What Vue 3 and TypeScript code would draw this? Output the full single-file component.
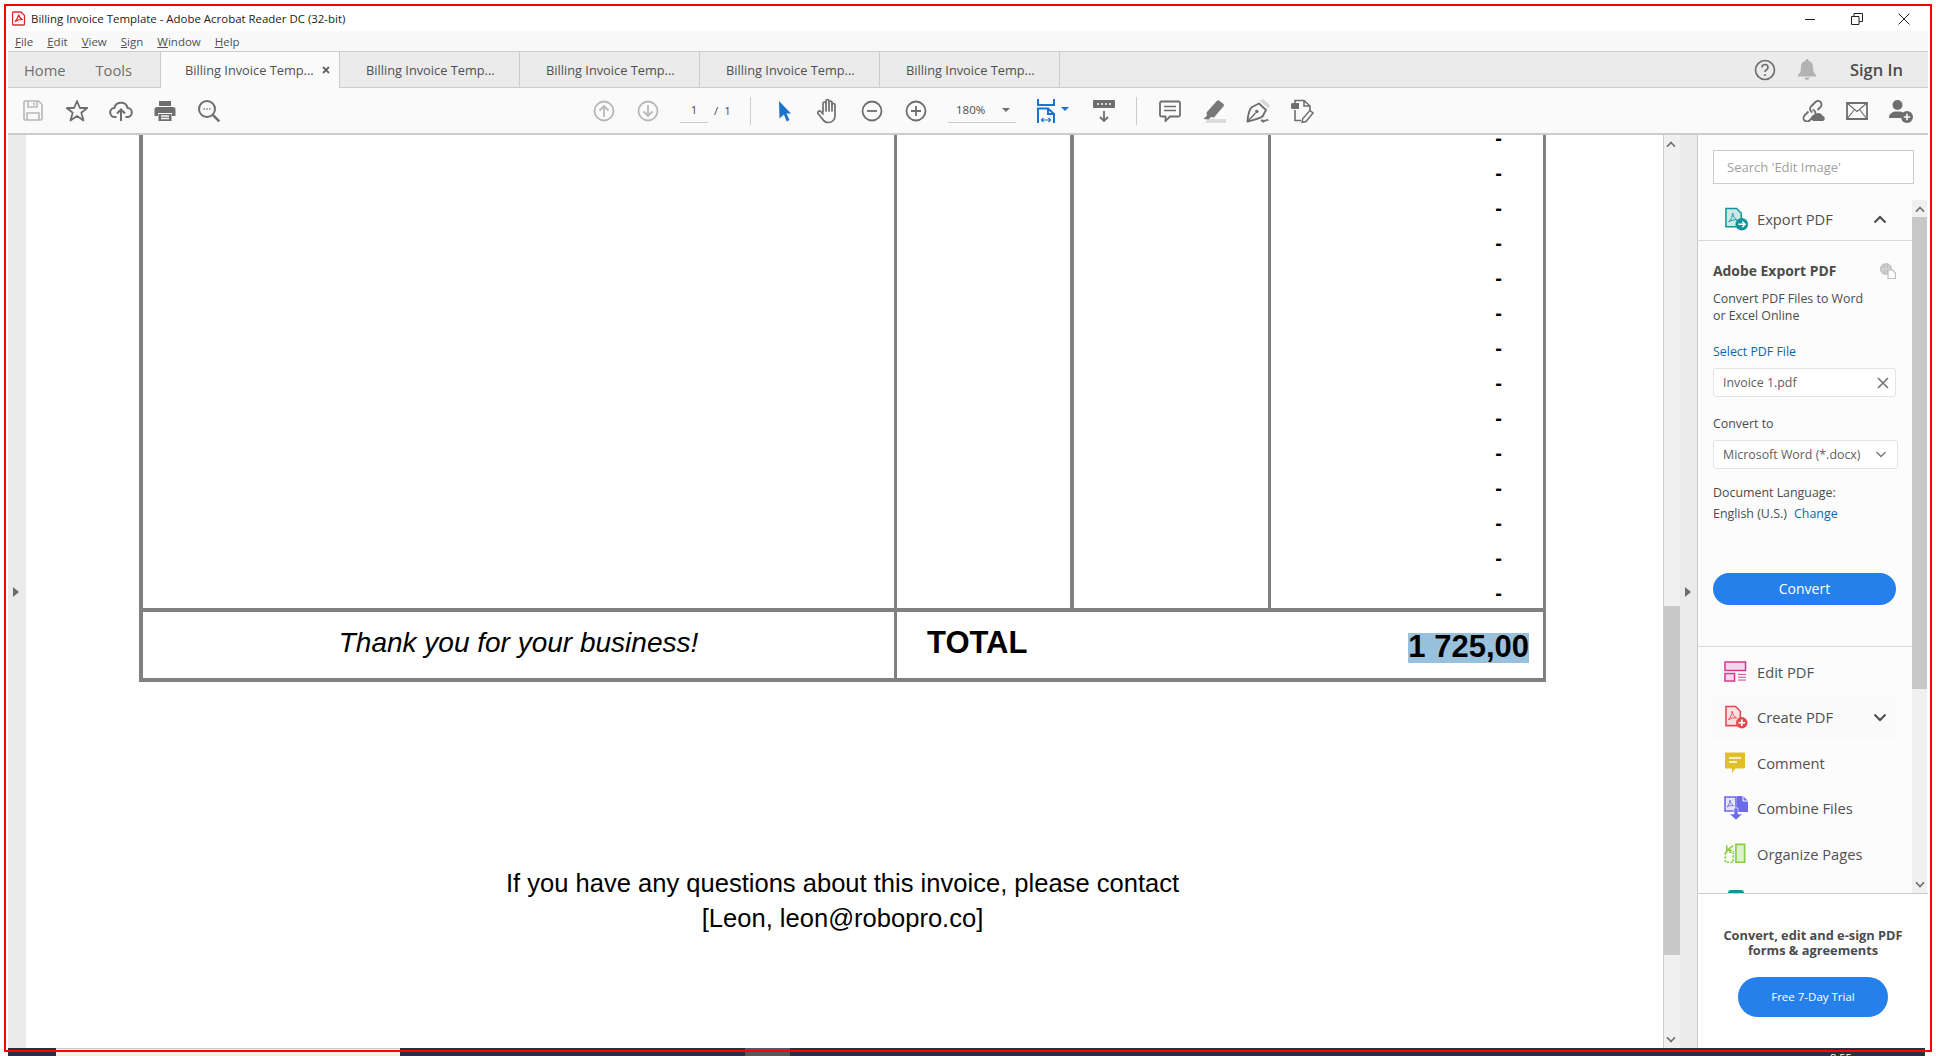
<script setup lang="ts">
const menus = [
  { key: 'F', rest: 'ile' },
  { key: 'E', rest: 'dit' },
  { key: 'V', rest: 'iew' },
  { key: 'S', rest: 'ign' },
  { key: 'W', rest: 'indow' },
  { key: 'H', rest: 'elp' }
]
const otherTabs = [1, 2, 3, 4]
const dashes = Array.from({ length: 14 }, (_, i) => i)
</script>

<template>
  <div class="screen">
    <header class="titlebar">
      <svg class="app-logo" width="14" height="15" viewBox="0 0 14 15">
        <path d="M1.5 1h7.5l3.500 3.500V13a1 1 0 0 1-1 1h-10a1 1 0 0 1-1-1V2a1 1 0 0 1 1-1z" fill="#fff" stroke="#e3242b" stroke-width="1.300" />
        <path d="M6.600 3.600c-.6 2.400-1.600 5-3.600 7.300 2-1.600 5-2.600 7.600-2.400-2.300-.9-3.600-2.600-4-4.900z" fill="none" stroke="#e3242b" stroke-width="1.200" />
      </svg>
      <span class="title">Billing Invoice Template - Adobe Acrobat Reader DC (32-bit)</span>
      <div class="win-controls">
        <svg width="12" height="12" viewBox="0 0 12 12"><path d="M1 6.500h10" stroke="#222" stroke-width="1" /></svg>
        <svg width="12" height="12" viewBox="0 0 12 12"><path d="M.5 3.500h7.500v8H.5zM3 3.500V.5h8.500v8H8" fill="none" stroke="#222" stroke-width="1" /></svg>
        <svg width="12" height="12" viewBox="0 0 12 12"><path d="M.5.5l11 11M11.500.5l-11 11" stroke="#222" stroke-width="1" /></svg>
      </div>
    </header>

    <nav class="menubar">
      <span v-for="m in menus" :key="m.key" class="menu"><u>{{ m.key }}</u>{{ m.rest }}</span>
    </nav>

    <div class="tabbar">
      <div class="home-tabs">
        <span>Home</span>
        <span>Tools</span>
      </div>
      <div class="tab active">
        <span>Billing Invoice Temp...</span>
        <svg class="tab-close" width="8" height="8" viewBox="0 0 8 8"><path d="M1 1l6 6M7 1l-6 6" stroke="#666" stroke-width="1.800" /></svg>
      </div>
      <div v-for="t in otherTabs" :key="t" class="tab">
        <span>Billing Invoice Temp...</span>
      </div>
      <div class="tab-right">
        <svg width="22" height="22" viewBox="0 0 22 22">
          <circle cx="11" cy="11" r="9.500" fill="none" stroke="#6e6e6e" stroke-width="1.700" />
          <path d="M8 8.500c0-4 6-4 6 0 0 2.300-3 2.200-3 4.500" fill="none" stroke="#6e6e6e" stroke-width="1.700" />
          <circle cx="11" cy="16" r="1.100" fill="#6e6e6e" />
        </svg>
        <svg class="bell" width="18" height="21" viewBox="0 0 18 21">
          <path d="M9 0a1.500 1.500 0 0 1 1.500 1.700C13.800 2.500 15 5 15 8.500c0 4 1 5.500 3 7.500v1.500H0V16c2-2 3-3.500 3-7.500C3 5 4.200 2.500 7.500 1.700A1.500 1.500 0 0 1 9 0zM6.500 18.500h5a2.500 2.500 0 0 1-5 0z" fill="#b3b3b3" />
        </svg>
        <span class="sign-in">Sign In</span>
      </div>
    </div>

    <div class="toolbar">
      <div class="tool-group">
        <button class="tool">
          <svg width="20" height="21" viewBox="0 0 20 21" fill="none" stroke="#b8b8b8" stroke-width="1.600">
            <path d="M1.500 1h14l3.500 3.500V18.500a1.500 1.500 0 0 1-1.500 1.500h-15A1.500 1.500 0 0 1 1 18.500V2z" />
            <path d="M5 1v6h9V1M11 2.500v3M4 20v-7h12v7" />
          </svg>
        </button>
        <button class="tool">
          <svg width="24" height="24" viewBox="0 0 24 24"><path d="M12 2l2.900 7h7.300l-5.900 4.800 2.200 7.600L12 17l-6.500 4.400 2.200-7.600L1.800 9h7.300z" fill="none" stroke="#6e6e6e" stroke-width="1.800" stroke-linejoin="round" /></svg>
        </button>
        <button class="tool">
          <svg width="24" height="24" viewBox="0 0 24 24" fill="none" stroke="#6e6e6e" stroke-width="2">
            <path d="M7.500 18H6a4.500 4.500 0 0 1-.6-9A6.800 6.800 0 0 1 18.600 9 4.500 4.500 0 0 1 18 18h-1.500" />
            <path d="M12 22V11.500M8 14.500l4-4 4 4" />
          </svg>
        </button>
        <button class="tool">
          <svg width="22" height="22" viewBox="0 0 22 22">
            <path d="M5 1h12v5H5zM3 7h16a2.500 2.500 0 0 1 2.500 2.500V16H18v-3H4v3H.5V9.500A2.500 2.500 0 0 1 3 7z" fill="#6e6e6e" />
            <path d="M4.500 14h13v7h-13z" fill="#6e6e6e" />
            <path d="M7 16h8M7 18.500h8" stroke="#fafafa" stroke-width="1.300" />
          </svg>
        </button>
        <button class="tool">
          <svg width="24" height="24" viewBox="0 0 24 24" fill="none" stroke="#6e6e6e">
            <circle cx="10" cy="10" r="8" stroke-width="2" />
            <path d="M15.800 15.800l6.500 6.500" stroke-width="2.600" />
            <path d="M6.500 10h1.400M9.300 10h1.400M12.100 10h1.400" stroke-width="1.500" />
          </svg>
        </button>
      </div>

      <div class="tool-group nav-group">
        <button class="tool">
          <svg width="22" height="22" viewBox="0 0 22 22" fill="none" stroke="#b8b8b8" stroke-width="1.800"><circle cx="11" cy="11" r="9.500" /><path d="M11 17V6M6.500 10.500L11 6l4.500 4.500" /></svg>
        </button>
        <button class="tool">
          <svg width="22" height="22" viewBox="0 0 22 22" fill="none" stroke="#b8b8b8" stroke-width="1.800"><circle cx="11" cy="11" r="9.500" /><path d="M11 5v11M6.500 11.500L11 16l4.500-4.500" /></svg>
        </button>
        <span class="page-field">1</span>
        <span class="page-total">/ &nbsp;1</span>
        <i class="tool-sep after"></i>
        <button class="tool cursor">
          <svg width="14" height="22" viewBox="0 0 14 22"><path d="M1 1l12 12.500H8.500l3 6.500-2.800 1.500-2.800-7L1.500 18.500z" fill="#1f72c9" /></svg>
        </button>
        <button class="tool">
          <svg width="24" height="26" viewBox="0 0 24 26" fill="none" stroke="#6e6e6e" stroke-width="1.700" stroke-linecap="round">
            <path d="M7 14V5.500a1.500 1.500 0 0 1 3 0V3a1.500 1.500 0 0 1 3 0v1.500a1.500 1.500 0 0 1 3 0V7a1.500 1.500 0 0 1 3 0v11c0 4-3 6.500-6.500 6.500-3 0-4.500-1-6-3.500L2 15.500c-1-1.800 1.500-3.500 3-1.800L7 16" />
            <path d="M10 5v8M13 3.500V13M16 5v8" />
          </svg>
        </button>
        <button class="tool">
          <svg width="22" height="22" viewBox="0 0 22 22" fill="none" stroke="#6e6e6e" stroke-width="1.800"><circle cx="11" cy="11" r="9.500" /><path d="M6 11h10" /></svg>
        </button>
        <button class="tool">
          <svg width="22" height="22" viewBox="0 0 22 22" fill="none" stroke="#6e6e6e" stroke-width="1.800"><circle cx="11" cy="11" r="9.500" /><path d="M6 11h10M11 6v10" /></svg>
        </button>
        <div class="zoom-field">
          <span>180%</span>
          <i class="caret"></i>
        </div>
        <button class="tool fit">
          <svg width="18" height="24" viewBox="0 0 18 24" fill="none" stroke="#1f72c9" stroke-width="2">
            <path d="M1 0v6h16V0" />
            <path d="M1 24V9.500h10l6 5.500v9M11 9.500V15h6" />
            <path d="M4.500 21h9M6.500 19l-2 2 2 2M11.500 19l2 2-2 2" stroke-width="1.200" />
          </svg>
          <i class="caret blue"></i>
        </button>
        <button class="tool kbd">
          <svg width="24" height="24" viewBox="0 0 24 24">
            <rect x="1" y="1" width="22" height="8" rx="1" fill="#6e6e6e" />
            <path d="M5 5h2M9 5h2M13 5h2M17 5h2" stroke="#fafafa" stroke-width="1.500" />
            <path d="M12 12v10M8 18l4 4 4-4" fill="none" stroke="#6e6e6e" stroke-width="1.800" />
          </svg>
        </button>
        <i class="tool-sep before after"></i>
        <button class="tool">
          <svg width="22" height="22" viewBox="0 0 22 22"><path d="M2.500 1.500h17a1.500 1.500 0 0 1 1.500 1.500v12a1.500 1.500 0 0 1-1.500 1.500H11L6.500 21v-4.500h-4A1.500 1.500 0 0 1 1 15V3a1.500 1.500 0 0 1 1.500-1.500z" fill="none" stroke="#6e6e6e" stroke-width="1.800" /><path d="M5 6.500h12M5 10.500h12" stroke="#6e6e6e" stroke-width="1.600" /></svg>
        </button>
        <button class="tool">
          <svg width="24" height="24" viewBox="0 0 24 24">
            <path d="M6 20h18v4H3z" fill="#dcdcdc" />
            <path d="M17 1.500l4.500 3.500a1.500 1.500 0 0 1 .2 2L12 18.500l-3-.5-2.500 2.500-5-.5 3.500-3.500-.5-3L15 1.700a1.500 1.500 0 0 1 2-.2z" fill="#787878" />
          </svg>
        </button>
        <button class="tool">
          <svg width="24" height="24" viewBox="0 0 24 24">
            <path d="M13.500 1.500L17 0l7 6-1.500 3.500z" fill="#d6d6d6" />
            <path d="M1.500 22.500C2 16 3 10 6 8l7-3.500 7 6.500-3.500 6.500C12 20 6 21.500 1.500 22.500z" fill="none" stroke="#6e6e6e" stroke-width="1.900" stroke-linejoin="round" />
            <path d="M2 22l7.500-8" stroke="#6e6e6e" stroke-width="1.400" />
            <circle cx="10.800" cy="12.500" r="1.800" fill="#6e6e6e" />
            <path d="M15 22.500c1-2 1.500-2 2 0s1-2 1.500-1 1 1 1.500 0 1-1 2.500 0" fill="none" stroke="#6e6e6e" stroke-width="1.400" />
          </svg>
        </button>
        <button class="tool">
          <svg width="24" height="24" viewBox="0 0 24 24">
            <path d="M1 5.500a1.500 1.500 0 0 1 1.500-1.500H9v6H2.500A1.500 1.500 0 0 1 1 8.500z" fill="#6e6e6e" />
            <path d="M5 4V1.500h9l6 5.500v4M14 1.500V7h6M5 11v10.500h6" fill="none" stroke="#6e6e6e" stroke-width="1.600" />
            <path d="M20 11.500l3 2.500-7 8.500-4 1 .8-4z" fill="#fafafa" stroke="#6e6e6e" stroke-width="1.500" />
          </svg>
        </button>
      </div>

      <div class="tool-group share-group">
        <button class="tool">
          <svg width="26" height="22" viewBox="0 0 26 22" fill="none" stroke="#6e6e6e" stroke-width="1.800">
            <path d="M8.500 11.500l-4 4a3.500 3.500 0 0 0 5 5l5-5a3.500 3.500 0 0 0-2-5.800" />
            <path d="M12.500 12.300a3.500 3.500 0 0 1-1.500-5.800l4.500-4.500a3.500 3.500 0 0 1 5 5l-3 3" />
            <path d="M14 21a3 3 0 0 1 .500-6 4.500 4.500 0 0 1 8 .8 2.700 2.700 0 0 1 .5 5.200z" fill="#6e6e6e" stroke="none" />
          </svg>
        </button>
        <button class="tool">
          <svg width="22" height="18" viewBox="0 0 22 18" fill="none" stroke="#6e6e6e"><path d="M1 1h20v16H1z" stroke-width="1.800" /><path d="M1 1l10 8.500L21 1M1 17l7.500-9.500M21 17l-7.500-9.500" stroke-width="1.200" /></svg>
        </button>
        <button class="tool">
          <svg width="24" height="24" viewBox="0 0 24 24">
            <circle cx="8.500" cy="6" r="5" fill="#6e6e6e" />
            <path d="M0 19c0-4 3-6 6-6.500h5c2 .3 3 1 3.800 2A7 7 0 0 0 12 19z" fill="#6e6e6e" />
            <circle cx="18" cy="18" r="6" fill="#6e6e6e" />
            <path d="M14.800 18h6.400M18 14.800v6.400" stroke="#fafafa" stroke-width="1.600" />
          </svg>
        </button>
      </div>
    </div>

    <main class="workspace">
      <div class="gutter">
        <i class="gutter-arrow"></i>
      </div>
      <section class="document">
        <div class="sheet">
          <div class="lines">
            <div class="col wide"></div>
            <div class="col mid"></div>
            <div class="col mid2"></div>
            <div class="col amounts">
              <span v-for="d in dashes" :key="d" class="dash">-</span>
            </div>
          </div>
          <div class="total-row">
            <div class="thanks">Thank you for your business!</div>
            <div class="total-cell">
              <strong class="total-label">TOTAL</strong>
              <strong class="total-value">1 725,00</strong>
            </div>
          </div>
          <p class="contact">If you have any questions about this invoice, please contact<br />[Leon, leon@robopro.co]</p>
        </div>
      </section>
      <div class="doc-scroll">
        <i class="chev up"></i>
        <div class="doc-thumb"></div>
        <i class="chev down"></i>
      </div>
      <div class="gutter right">
        <i class="gutter-arrow"></i>
      </div>

      <aside class="panel">
        <div class="search-wrap">
          <div class="search">Search 'Edit Image'</div>
        </div>
        <div class="panel-scroll">
          <div class="panel-body">
            <div class="tool-row export">
              <svg class="tool-icon" width="23" height="24" viewBox="0 0 24 24">
                <path d="M1 1h11l5 5v14H1z" fill="#cfe6e8" stroke="#12949a" stroke-width="1.600" />
                <path d="M8 6c-.3 3-1.300 6-4 9 2-1.500 5-2.500 8.500-2-2.500-1.500-4-3.700-4.500-7z" fill="none" stroke="#12949a" stroke-width="1" />
                <circle cx="17.500" cy="17.500" r="6.500" fill="#12949a" />
                <path d="M14 17.500h6.500M18 14.500l3 3-3 3" fill="none" stroke="#fff" stroke-width="1.500" />
              </svg>
              <span>Export PDF</span>
              <svg class="row-chev" width="14" height="9" viewBox="0 0 14 9"><path d="M1.500 7.500L7 2l5.500 5.500" fill="none" stroke="#4b4b4b" stroke-width="2" /></svg>
            </div>
            <div class="export-form">
              <div class="form-head">
                <strong>Adobe Export PDF</strong>
                <svg width="16" height="16" viewBox="0 0 16 16">
                  <circle cx="6" cy="6" r="6" fill="#bdbdbd" />
                  <path d="M1 6h10M6 0v12M3 1.500v9M9 1.500v9" stroke="#e8e8e8" stroke-width=".7" />
                  <path d="M8 7h4.500L15.500 10v5.500H8z" fill="#fcfcfc" stroke="#bdbdbd" stroke-width="1.200" />
                </svg>
              </div>
              <p class="desc">Convert PDF Files to Word<br />or Excel Online</p>
              <div class="label link">Select PDF File</div>
              <div class="field file">
                <span>Invoice 1.pdf</span>
                <svg width="12" height="12" viewBox="0 0 12 12"><path d="M1 1l10 10M11 1L1 11" stroke="#777" stroke-width="1.700" /></svg>
              </div>
              <div class="label convert-to">Convert to</div>
              <div class="field select">
                <span>Microsoft Word (*.docx)</span>
                <svg width="10" height="7" viewBox="0 0 10 7"><path d="M.5 1L5 5.500 9.500 1" fill="none" stroke="#777" stroke-width="1.300" /></svg>
              </div>
              <div class="label doc-lang">Document Language:</div>
              <div class="label lang">English (U.S.) <span class="link change">Change</span></div>
              <div class="convert-btn">Convert</div>
            </div>
            <div class="tool-list">
              <div class="tool-row">
                <svg class="tool-icon" width="23" height="21" viewBox="0 0 24 22" fill="none" stroke="#d83790" stroke-width="1.600">
                  <path d="M1 1h21.500v9H1z" fill="#f7d7e9" />
                  <path d="M1 13h10v8H1z" fill="#f7d7e9" />
                  <path d="M14.500 14H23M14.500 17H23M14.500 20H23" stroke-width="1" />
                </svg>
                <span>Edit PDF</span>
              </div>
              <div class="tool-row hovered">
                <svg class="tool-icon" width="23" height="24" viewBox="0 0 24 24">
                  <path d="M1 1h10l5 5v15H1z" fill="#fbe0e2" stroke="#e34850" stroke-width="1.600" />
                  <path d="M7.500 6c-.3 3-1.300 6-4 9 2-1.500 5-2.500 8.500-2-2.500-1.500-4-3.700-4.500-7z" fill="none" stroke="#e34850" stroke-width="1" />
                  <circle cx="17.500" cy="18" r="6" fill="#e34850" />
                  <path d="M14 18h7M17.500 14.500v7" stroke="#fff" stroke-width="1.800" />
                </svg>
                <span>Create PDF</span>
                <svg class="row-chev" width="14" height="9" viewBox="0 0 14 9"><path d="M1.500 1.500L7 7l5.500-5.500" fill="none" stroke="#4b4b4b" stroke-width="2" /></svg>
              </div>
              <div class="tool-row">
                <svg class="tool-icon" width="22" height="24" viewBox="0 0 22 24">
                  <path d="M2 1.500h18a1 1 0 0 1 1 1v14a1 1 0 0 1-1 1h-8.500L8 22v-4.500H2a1 1 0 0 1-1-1v-14a1 1 0 0 1 1-1z" fill="#e2bf28" />
                  <path d="M5 7h12M5 11h8" stroke="#fff" stroke-width="1.500" />
                </svg>
                <span>Comment</span>
              </div>
              <div class="tool-row">
                <svg class="tool-icon" width="24" height="24" viewBox="0 0 24 24">
                  <path d="M1 1h11v14H1z" fill="#e4e3fb" stroke="#6d6be8" stroke-width="1.600" />
                  <path d="M6 4c-.2 2.500-1 5-3 7 1.600-1.100 3.800-1.800 6.500-1.400C7.500 8.400 6.400 6.500 6 4z" fill="none" stroke="#6d6be8" stroke-width=".9" />
                  <path d="M13 0h6l5 5v11H13z" fill="#6d6be8" />
                  <path d="M19 0v5h5" fill="none" stroke="#fff" stroke-width="1" />
                  <path d="M10 12v6H5.500l6.500 6 6.500-6H14v-6z" fill="#6d6be8" stroke="#fcfcfc" stroke-width=".6" />
                </svg>
                <span>Combine Files</span>
              </div>
              <div class="tool-row">
                <svg class="tool-icon" width="22" height="21" viewBox="0 0 24 22" fill="none" stroke="#86cf3f" stroke-width="1.800">
                  <path d="M13 1h9.500v19.500H13z" fill="#dff2cc" />
                  <path d="M1.500 9.500h8.500v11H1.500z" stroke-dasharray="2.500 1.500" />
                  <path d="M10 2.500L4 7M3 2v5.500h6" stroke-width="1.800" />
                </svg>
                <span>Organize Pages</span>
              </div>
              <svg class="tool-icon clipped" width="16" height="6" viewBox="0 0 16 6"><path d="M0 6V3q0-3 3-3h10q3 0 3 3v3z" fill="#12949a" /></svg>
            </div>
          </div>
          <div class="panel-bar">
            <i class="chev up small"></i>
            <div class="panel-thumb"></div>
            <i class="chev down small"></i>
          </div>
        </div>
        <div class="promo">
          <p>Convert, edit and e-sign PDF<br />forms &amp; agreements</p>
          <div class="trial-btn">Free 7-Day Trial</div>
        </div>
      </aside>
    </main>

    <footer class="taskbar">
      <i class="seg dark s1"></i>
      <i class="seg pale s2"></i>
      <i class="seg dark s3"></i>
      <i class="seg lit s4"></i>
      <i class="seg dark s5"></i>
      <span class="clock">8:55</span>
    </footer>

    <div class="red-frame"></div>
  </div>
</template>

<style>
html,
body {
  margin: 0;
  background: #fff;
}
</style>

<style scoped>
.screen {
  position: relative;
  box-sizing: border-box;
  width: 1936px;
  height: 1056px;
  padding: 6px 8px 0;
  display: flex;
  flex-direction: column;
  overflow: hidden;
  background: #fff;
  font-family: "Open Sans", "Noto Sans", sans-serif;
  color: #4b4b4b;
}

.red-frame {
  position: absolute;
  left: 4px;
  top: 4px;
  width: 1928px;
  height: 1048px;
  box-sizing: border-box;
  border: 2px solid #f00;
  pointer-events: none;
}

.titlebar {
  height: 25px;
  display: flex;
  align-items: center;
  flex: none;
  background: #fff;
}

.app-logo {
  margin-left: 4px;
}

.title {
  margin-left: 5px;
  font-size: 11.450px;
  color: #222;
}

.win-controls {
  margin-left: auto;
  display: flex;
  gap: 35px;
  padding-right: 18px;
}

.menubar {
  height: 20px;
  flex: none;
  background: #f9f9f9;
  display: flex;
  align-items: center;
  gap: 14px;
  padding-left: 7px;
  font-size: 11.500px;
  color: #505050;
}

.tabbar {
  height: 37px;
  flex: none;
  box-sizing: border-box;
  background: #ebebeb;
  border-top: 1px solid #ccc;
  border-bottom: 1px solid #ccc;
  display: flex;
  align-items: stretch;
}

.home-tabs {
  width: 152px;
  display: flex;
  align-items: center;
  gap: 30px;
  padding-left: 16px;
  box-sizing: border-box;
  font-size: 14.700px;
  color: #6e6e6e;
}

.tab {
  width: 180px;
  box-sizing: border-box;
  border-right: 1px solid #ccc;
  display: flex;
  align-items: center;
  padding-left: 26px;
  font-size: 12.800px;
  color: #505050;
}

.tab.active {
  position: relative;
  background: #fafafa;
  border-left: 1px solid #ccc;
  margin-bottom: -1px;
  padding-left: 24px;
}

.tab-close {
  margin-left: 8px;
}

.tab-right {
  margin-left: auto;
  display: flex;
  align-items: center;
  padding-right: 25px;
}

.bell {
  margin-left: 22px;
}

.sign-in {
  margin-left: 34px;
  font-size: 16.500px;
  font-weight: 600;
  color: #4b4b4b;
}

.toolbar {
  height: 47px;
  flex: none;
  box-sizing: border-box;
  background: #fafafa;
  border-bottom: 2px solid #ccc;
  display: flex;
  align-items: center;
  padding-left: 3px;
}

.tool-group {
  display: flex;
  align-items: center;
}

.nav-group {
  margin-left: 351px;
}

.share-group {
  margin-left: auto;
  padding-right: 5px;
}

.tool {
  width: 44px;
  height: 36px;
  padding: 0;
  border: 0;
  background: none;
  display: flex;
  align-items: center;
  justify-content: center;
}

.tool.cursor {
  padding-left: 2px;
}

.tool.fit {
  position: relative;
  margin-left: 10px;
  padding-right: 4px;
}

.tool.kbd {
  margin-left: 12px;
}

.page-field {
  width: 28px;
  margin-left: 10px;
  line-height: 24px;
  border-bottom: 1px solid #ccc;
  text-align: center;
  font-size: 11.500px;
}

.page-total {
  width: 36px;
  margin-left: 6px;
  font-size: 11.500px;
}

.tool-sep {
  width: 1px;
  height: 28px;
  background: #ccc;
}

.tool-sep.after {
  margin-right: 11px;
}

.tool-sep.before {
  margin-left: 10px;
}

.zoom-field {
  position: relative;
  width: 68px;
  margin-left: 10px;
  height: 24px;
  line-height: 24px;
  border-bottom: 1px solid #ccc;
  box-sizing: content-box;
  font-size: 11.500px;
}

.zoom-field span {
  margin-left: 8px;
}

.caret {
  position: absolute;
  right: 6px;
  top: 10px;
  border-left: 4px solid transparent;
  border-right: 4px solid transparent;
  border-top: 4px solid #6e6e6e;
}

.caret.blue {
  right: 1px;
  top: 14px;
  border-top-color: #1f72c9;
}

.workspace {
  height: 913px;
  flex: none;
  display: flex;
  min-height: 0;
}

.gutter {
  width: 18px;
  flex: none;
  background: #ebebeb;
  display: flex;
  align-items: center;
}

.gutter.right {
  width: 17px;
  border-right: 1px solid #ccc;
  box-sizing: content-box;
}

.gutter-arrow {
  margin: 0 0 0 5px;
  border-top: 5px solid transparent;
  border-bottom: 5px solid transparent;
  border-left: 6px solid #6e6e6e;
}

.document {
  width: 1637px;
  flex: none;
  background: #fff;
  overflow: hidden;
}

.sheet {
  width: 1407px;
  margin-left: 113px;
}

.lines {
  height: 477px;
  box-sizing: border-box;
  border-left: 4px solid #808080;
  border-right: 3px solid #808080;
  border-bottom: 4px solid #808080;
  display: grid;
  grid-template-columns: 754px 177px 197px 1fr;
}

.col {
  height: 473px;
  box-sizing: border-box;
  border-right: 3px solid #808080;
}

.col.mid {
  border-right-width: 4px;
}

.col.amounts {
  border-right: 0;
  display: flex;
  flex-direction: column;
  align-items: flex-end;
  justify-content: flex-end;
  gap: 5px;
  padding-right: 41px;
}

.dash {
  flex: none;
  height: 30px;
  font: bold 20px/30px "Liberation Sans", Arial, sans-serif;
  color: #000;
}

.total-row {
  height: 70px;
  box-sizing: border-box;
  border: 4px solid #808080;
  border-top: 0;
  border-right-width: 3px;
  display: grid;
  grid-template-columns: 754px 1fr;
  font-family: "Liberation Sans", Arial, sans-serif;
  color: #000;
}

.thanks {
  border-right: 3px solid #808080;
  font-style: italic;
  font-size: 28px;
  line-height: 62px;
  text-align: center;
}

.total-cell {
  display: flex;
  justify-content: space-between;
  align-items: flex-start;
  padding: 0 14px 0 30px;
}

.total-label {
  font-size: 31px;
  line-height: 30px;
  margin-top: 16px;
}

.total-value {
  font-size: 31px;
  line-height: 27px;
  padding-bottom: 3px;
  margin-top: 21px;
  background: #99c0dc;
}

.contact {
  margin: 184px 0 0;
  text-align: center;
  font: 25.550px/35px "Liberation Sans", Arial, sans-serif;
  color: #000;
}

.doc-scroll {
  width: 16px;
  flex: none;
  box-sizing: content-box;
  background: #f0f0f0;
  border-left: 1px solid #ccc;
  position: relative;
}

.doc-thumb {
  position: absolute;
  left: 0;
  right: 0;
  top: 471px;
  height: 349px;
  background: #c8c8c8;
}

.chev {
  position: absolute;
  left: 3px;
  width: 6px;
  height: 6px;
  border-top: 2px solid #6e6e6e;
  border-left: 2px solid #6e6e6e;
}

.chev.up {
  top: 7px;
  transform: rotate(45deg) scale(.8);
}

.chev.down {
  bottom: 6px;
  transform: rotate(225deg) scale(.8);
}

.panel {
  width: 230px;
  flex: none;
  background: #fcfcfc;
  display: flex;
  flex-direction: column;
}

.search-wrap {
  height: 65px;
  flex: none;
  box-sizing: border-box;
  padding: 15px 14px 0 15px;
}

.search {
  height: 34px;
  box-sizing: border-box;
  border: 1px solid #ccc;
  background: #fff;
  padding-left: 13px;
  line-height: 33px;
  font-size: 13px;
  color: #a0a0a0;
}

.panel-scroll {
  flex: none;
  height: 693px;
  display: flex;
}

.panel-body {
  width: 214px;
  flex: none;
  overflow: hidden;
}

.panel-bar {
  width: 15px;
  flex: none;
  position: relative;
  background: #f0f0f0;
}

.panel-thumb {
  position: absolute;
  left: 0;
  right: 0;
  top: 17px;
  height: 472px;
  background: #c8c8c8;
}

.chev.small {
  left: 4px;
}

.tool-row {
  display: flex;
  align-items: center;
  height: 45.500px;
  padding-left: 26px;
  box-sizing: border-box;
  position: relative;
  font-size: 14.700px;
  color: #505050;
}

.tool-row.export {
  height: 40px;
  padding-left: 27px;
  padding-bottom: 2px;
}

.tool-icon {
  flex: none;
}

.tool-row span {
  position: absolute;
  left: 59px;
}

.row-chev {
  position: absolute;
  left: 175px;
}

.tool-row.hovered {
  background: #fafafa;
  margin-left: 15px;
  width: 184px;
  padding-left: 12px;
}

.tool-row.hovered span {
  left: 44px;
}

.tool-row.hovered .row-chev {
  left: 160px;
}

.export-form {
  border-top: 1px solid #d8d8d8;
  border-bottom: 1px solid #d8d8d8;
  height: 407px;
  box-sizing: border-box;
  padding: 21px 0 0 15px;
  font-size: 12.400px;
  line-height: 17px;
}

.form-head {
  display: flex;
  justify-content: space-between;
  align-items: center;
  width: 183px;
  font-size: 13.900px;
}

.form-head strong {
  color: #4b4b4b;
}

.desc {
  margin: 11px 0 0;
}

.label.link,
.link {
  color: #0d66a8;
}

.label.link {
  margin-top: 19px;
}

.field {
  box-sizing: border-box;
  height: 29px;
  margin-top: 8px;
  width: 183px;
  background: #fff;
  border: 1px solid #e3e3e3;
  border-radius: 3px;
  display: flex;
  align-items: center;
  justify-content: space-between;
  padding: 0 6px 0 9px;
  color: #606060;
}

.field.select {
  width: 185px;
  padding-right: 11px;
}

.convert-to {
  margin-top: 18px;
}

.doc-lang {
  margin-top: 15px;
}

.lang {
  margin-top: 4px;
}

.change {
  margin-left: 4px;
}

.convert-btn {
  width: 183px;
  height: 32px;
  margin-top: 51px;
  border-radius: 16px;
  background: #2680eb;
  color: #fff;
  text-align: center;
  line-height: 31px;
  font-size: 14px;
}

.tool-list {
  padding-top: 2px;
  position: relative;
}

.clipped {
  display: block;
  margin: 13px 0 0 30px;
}

.promo {
  height: 155px;
  flex: none;
  box-sizing: border-box;
  border-top: 1px solid #ccc;
  background: #fefefe;
  text-align: center;
  padding-top: 34px;
}

.promo p {
  margin: 0;
  font-size: 12.800px;
  line-height: 15px;
  font-weight: 700;
  color: #4b4b4b;
}

.trial-btn {
  width: 150px;
  height: 40px;
  margin: 19px auto 0;
  border-radius: 20px;
  background: #2680eb;
  color: #fff;
  line-height: 39px;
  font-size: 11.500px;
}

.taskbar {
  height: 8px;
  flex: none;
  display: flex;
  position: relative;
  overflow: hidden;
}

.seg {
  display: block;
  height: 8px;
}

.seg.dark {
  background: #1f3640;
}

.seg.pale {
  background: #f0f0f0;
  border-top: 1px solid #ccc;
  box-sizing: border-box;
}

.seg.lit {
  background: #4c5c66;
}

.s1 { width: 48px; }
.s2 { width: 344px; }
.s3 { width: 345px; }
.s4 { width: 45px; }
.s5 { flex: 1; margin-right: 3px; }

.clock {
  position: absolute;
  left: 1822px;
  top: 4px;
  font-size: 11px;
  line-height: 12px;
  color: #fff;
}
</style>
